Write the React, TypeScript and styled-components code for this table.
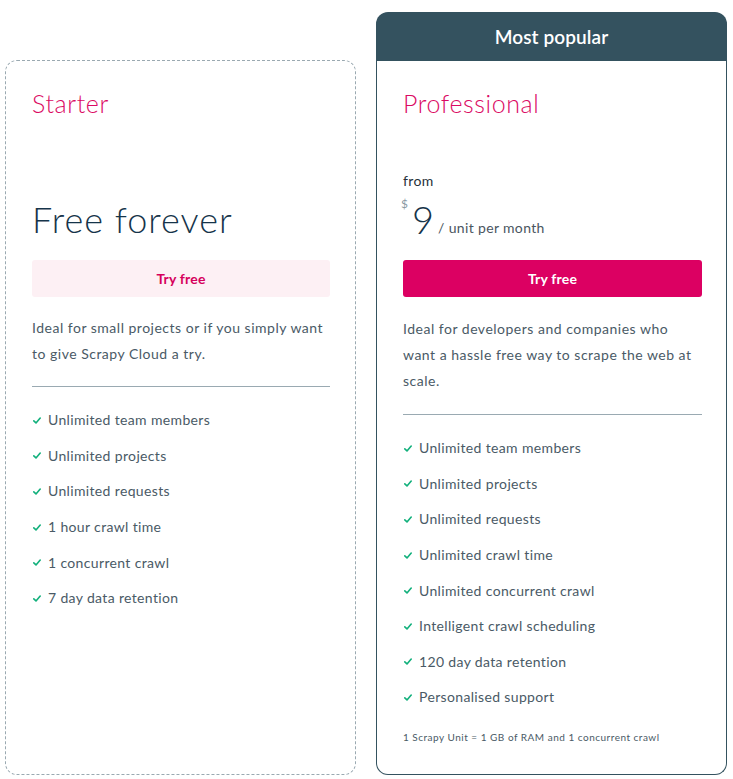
import React from "react";
import styled, { createGlobalStyle } from "styled-components";

const Global = createGlobalStyle`
  html, body { margin: 0; padding: 0; background: #fff; }
  body { font-family: Lato, "Noto Sans", sans-serif; -webkit-font-smoothing: antialiased; }
  * { box-sizing: border-box; }
`;

const Page = styled.div`
  display: grid;
  grid-template-columns: 351px 351px;
  column-gap: 20px;
  padding: 12px 6px 4px 5px;
  width: 733px;
  height: 779px;
`;

const Column = styled.div<{ $offset?: boolean }>`
  display: flex;
  flex-direction: column;
  padding-top: ${(p) => (p.$offset ? "48px" : "0")};
`;

const Header = styled.div`
  height: 49px;
  background: #34525f;
  border-radius: 12px 12px 0 0;
  color: #fff;
  font-size: 19px;
  font-weight: 600;
  display: flex;
  align-items: center;
  justify-content: center;
  letter-spacing: 0.1px;
`;

const Card = styled.div<{ $featured?: boolean }>`
  flex: 1;
  display: flex;
  flex-direction: column;
  padding: ${(p) => (p.$featured ? "27px 24px 24px 26px" : "27px 25px 24px 26px")};
  border: ${(p) => (p.$featured ? "1px solid #34525f" : "1px dashed #9aa9b1")};
  border-radius: ${(p) => (p.$featured ? "0 0 12px 12px" : "12px")};
  border-top: ${(p) => (p.$featured ? "none" : undefined)};
`;

const Title = styled.h2`
  margin: 0;
  font-size: 25px;
  font-weight: 300;
  color: #db0a63;
  line-height: 30px;
  height: 30px;
  letter-spacing: 0.6px;
`;

const PriceArea = styled.div`
  height: 142px;
  display: flex;
  flex-direction: column;
  justify-content: flex-end;
  padding-bottom: 18px;
`;

const FreeText = styled.div`
  font-size: 36px;
  font-weight: 300;
  color: #16344a;
  line-height: 40px;
  letter-spacing: 1px;
  margin-bottom: 3px;
`;

const From = styled.div`
  font-size: 14px;
  color: #26303a;
  line-height: 18px;
  letter-spacing: 0.35px;
  margin-bottom: 12px;
`;

const PriceRow = styled.div`
  display: flex;
  align-items: flex-end;
  height: 40px;
  padding-bottom: 9px;
`;

const Currency = styled.span`
  font-size: 12px;
  line-height: 12px;
  color: #8b9aa3;
  align-self: flex-start;
  margin-top: -4px;
  margin-right: 4px;
  margin-left: -2px;
`;

const Amount = styled.span`
  font-size: 38px;
  font-weight: 300;
  color: #16344a;
  line-height: 28px;
`;

const Unit = styled.span`
  font-size: 14px;
  line-height: 14px;
  color: #4a5560;
  margin-left: 4px;
  margin-bottom: -2px;
  letter-spacing: 0.35px;
`;

const Button = styled.button<{ $primary?: boolean }>`
  height: 37px;
  width: 100%;
  border: none;
  border-radius: 3px;
  font-family: inherit;
  font-size: 14px;
  font-weight: 700;
  cursor: pointer;
  letter-spacing: 0.2px;
  background: ${(p) => (p.$primary ? "#dc0062" : "#fdf0f4")};
  color: ${(p) => (p.$primary ? "#fff" : "#d6005c")};
`;

const Desc = styled.p<{ $featured?: boolean }>`
  margin: ${(p) => (p.$featured ? "19px 0 0" : "18px 0 0")};
  font-size: 14px;
  line-height: 26px;
  color: #4a5a66;
  padding-bottom: ${(p) => (p.$featured ? "20px" : "19px")};
  border-bottom: 1px solid #9aaab2;
  letter-spacing: 0.5px;
`;

const List = styled.ul`
  list-style: none;
  margin: 15px 0 0;
  padding: 0;
  display: flex;
  flex-direction: column;
`;

const Item = styled.li`
  display: flex;
  align-items: center;
  height: 35.6px;
  font-size: 14px;
  color: #4a5a66;
  letter-spacing: 0.35px;
`;

const Check = styled.svg`
  width: 8px;
  height: 7px;
  margin: 1px 7px 0 1px;
  flex: none;
`;

const Note = styled.div`
  margin-top: 16px;
  font-size: 10px;
  color: #4a5a66;
  letter-spacing: 0.5px;
`;

const CheckIcon = () => (
  <Check viewBox="0 0 8 7">
    <path d="M0.8 3.8 L3 5.9 L7.2 1" fill="none" stroke="#12b07c" strokeWidth="1.6" strokeLinecap="round" strokeLinejoin="round" />
  </Check>
);

const starter = [
  "Unlimited team members",
  "Unlimited projects",
  "Unlimited requests",
  "1 hour crawl time",
  "1 concurrent crawl",
  "7 day data retention",
];

const pro = [
  "Unlimited team members",
  "Unlimited projects",
  "Unlimited requests",
  "Unlimited crawl time",
  "Unlimited concurrent crawl",
  "Intelligent crawl scheduling",
  "120 day data retention",
  "Personalised support",
];

export default function App() {
  return (
    <>
      <Global />
      <Page>
        <Column $offset>
          <Card>
            <Title>Starter</Title>
            <PriceArea>
              <FreeText>Free forever</FreeText>
            </PriceArea>
            <Button>Try free</Button>
            <Desc>Ideal for small projects or if you simply want to give Scrapy Cloud a try.</Desc>
            <List>
              {starter.map((s) => (
                <Item key={s}>
                  <CheckIcon />
                  {s}
                </Item>
              ))}
            </List>
          </Card>
        </Column>
        <Column>
          <Header>Most popular</Header>
          <Card $featured>
            <Title>Professional</Title>
            <PriceArea>
              <From>from</From>
              <PriceRow>
                <Currency>$</Currency>
                <Amount>9</Amount>
                <Unit>/ unit per month</Unit>
              </PriceRow>
            </PriceArea>
            <Button $primary>Try free</Button>
            <Desc $featured>Ideal for developers and companies who want a hassle free way to scrape the web at scale.</Desc>
            <List>
              {pro.map((s) => (
                <Item key={s}>
                  <CheckIcon />
                  {s}
                </Item>
              ))}
            </List>
            <Note>1 Scrapy Unit = 1 GB of RAM and 1 concurrent crawl</Note>
          </Card>
        </Column>
      </Page>
    </>
  );
}
